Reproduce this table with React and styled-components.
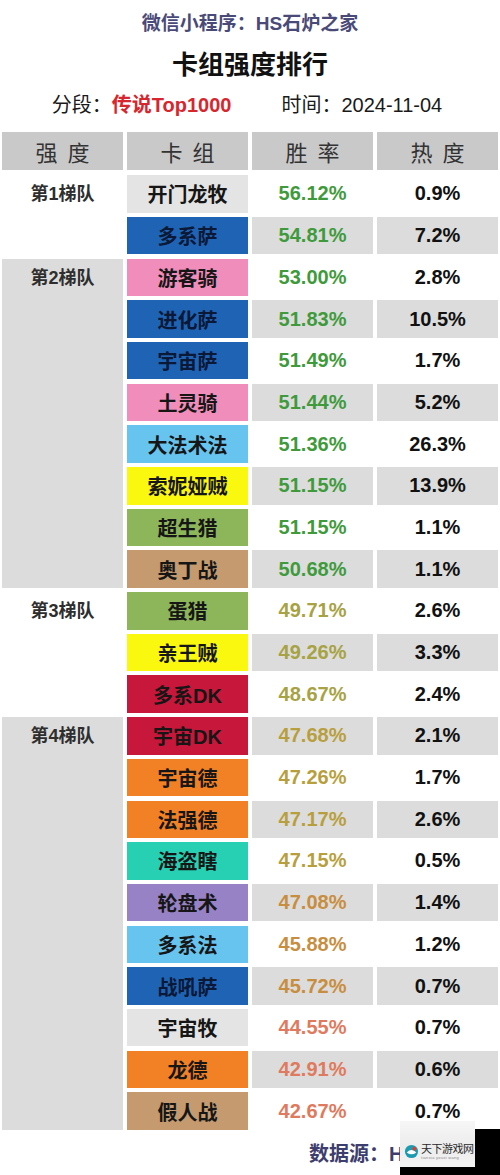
import React from "react";
import styled, { createGlobalStyle } from "styled-components";

const GlobalStyle = createGlobalStyle`
  html, body {
    margin: 0;
    padding: 0;
    background: #ffffff;
  }
  body {
    font-family: "Liberation Sans", "Noto Sans CJK SC", sans-serif;
  }
`;

const DECK_COLORS = {
  priest: "#e4e4e4",
  shaman: "#1f63b4",
  paladin: "#f08dbb",
  mage: "#66c4ee",
  rogue: "#fbf80f",
  hunter: "#8db55a",
  warrior: "#c49a6e",
  dk: "#c7173a",
  druid: "#f28025",
  dh: "#27d0b3",
  warlock: "#9682c4",
};

const RATE_COLORS = {
  high: "#3f9a3c",
  mid: "#a7a243",
  low: "#b89f3e",
  lower: "#c88e3f",
  bottom: "#df7a5e",
};

const tiers = [
  {
    name: "第1梯队",
    decks: [
      ["开门龙牧", "priest", "56.12%", "high", "0.9%"],
      ["多系萨", "shaman", "54.81%", "high", "7.2%"],
    ],
  },
  {
    name: "第2梯队",
    decks: [
      ["游客骑", "paladin", "53.00%", "high", "2.8%"],
      ["进化萨", "shaman", "51.83%", "high", "10.5%"],
      ["宇宙萨", "shaman", "51.49%", "high", "1.7%"],
      ["土灵骑", "paladin", "51.44%", "high", "5.2%"],
      ["大法术法", "mage", "51.36%", "high", "26.3%"],
      ["索妮娅贼", "rogue", "51.15%", "high", "13.9%"],
      ["超生猎", "hunter", "51.15%", "high", "1.1%"],
      ["奥丁战", "warrior", "50.68%", "high", "1.1%"],
    ],
  },
  {
    name: "第3梯队",
    decks: [
      ["蛋猎", "hunter", "49.71%", "mid", "2.6%"],
      ["亲王贼", "rogue", "49.26%", "mid", "3.3%"],
      ["多系DK", "dk", "48.67%", "mid", "2.4%"],
    ],
  },
  {
    name: "第4梯队",
    decks: [
      ["宇宙DK", "dk", "47.68%", "low", "2.1%"],
      ["宇宙德", "druid", "47.26%", "low", "1.7%"],
      ["法强德", "druid", "47.17%", "low", "2.6%"],
      ["海盗瞎", "dh", "47.15%", "low", "0.5%"],
      ["轮盘术", "warlock", "47.08%", "lower", "1.4%"],
      ["多系法", "mage", "45.88%", "lower", "1.2%"],
      ["战吼萨", "shaman", "45.72%", "lower", "0.7%"],
      ["宇宙牧", "priest", "44.55%", "bottom", "0.7%"],
      ["龙德", "druid", "42.91%", "bottom", "0.6%"],
      ["假人战", "warrior", "42.67%", "bottom", "0.7%"],
    ],
  },
];

const Page = styled.div`
  position: relative;
  width: 500px;
  height: 1175px;
  overflow: hidden;
  background: #ffffff;
`;

const Header = styled.header`
  display: flex;
  flex-direction: column;
  align-items: center;
  padding-top: 11px;
`;

const Source = styled.div`
  font-size: 19px;
  line-height: 26px;
  font-weight: 600;
  color: #4a4a78;
`;

const Title = styled.h1`
  margin: 12px 0 0;
  font-size: 26px;
  line-height: 32px;
  font-weight: 700;
  color: #111111;
`;

const Meta = styled.div`
  display: flex;
  gap: 50px;
  margin-top: 11px;
  font-size: 20px;
  line-height: 26px;
  color: #1a1a1a;
  margin-right: 6px;
`;

const Highlight = styled.span`
  color: #d8262e;
  font-weight: 700;
`;

const Table = styled.div`
  display: flex;
  flex-direction: column;
  gap: 4.2px;
  padding: 0 2px;
  margin-top: 14px;
`;

const Tier = styled.div`
  display: grid;
  grid-template-columns: 121px 1fr;
  column-gap: 4px;
`;

const HeadRow = styled.div`
  display: grid;
  grid-template-columns: repeat(4, 1fr);
  column-gap: 4px;
  height: 38px;
  margin-bottom: 1px;
`;

const HeadCell = styled.div`
  display: flex;
  align-items: center;
  justify-content: center;
  background: #c9c9c9;
  color: #333333;
  font-size: 22px;
  letter-spacing: 10px;
  padding-left: 10px;
`;

const TierLabel = styled.div`
  background: ${(p) => (p.$shaded ? "#dcdcdc" : "#ffffff")};
  color: #2e2e2e;
  font-size: 18px;
  font-weight: 600;
  text-align: center;
  padding-top: 7px;
  line-height: 24px;
`;

const Rows = styled.div`
  display: flex;
  flex-direction: column;
  gap: 4.2px;
`;

const DeckRow = styled.div`
  display: grid;
  grid-template-columns: repeat(3, 1fr);
  column-gap: 4px;
  height: 37.5px;
`;

const Cell = styled.div`
  display: flex;
  align-items: center;
  justify-content: center;
  font-size: 20px;
  font-weight: 700;
`;

const DeckCell = styled(Cell)`
  background: ${(p) => DECK_COLORS[p.$cls]};
  color: ${(p) => (p.$cls === "shaman" ? "#0b1836" : "#161616")};
`;

const RateCell = styled(Cell)`
  background: ${(p) => (p.$shaded ? "#dcdcdc" : "#ffffff")};
  color: ${(p) => RATE_COLORS[p.$level]};
  font-weight: 600;
`;

const HeatCell = styled(Cell)`
  background: ${(p) => (p.$shaded ? "#dcdcdc" : "#ffffff")};
  color: #111111;
`;

const Footer = styled.div`
  display: flex;
  justify-content: flex-start;
  padding-left: 309px;
  margin-top: 8px;
  font-size: 20px;
  font-weight: 700;
  color: #3e3e6e;
  white-space: nowrap;
`;

const Watermark = styled.div`
  position: absolute;
  right: 0;
  bottom: 0;
  width: 100px;
  height: 46px;
  background: #000000;
`;

const WatermarkCard = styled.div`
  position: absolute;
  left: 0;
  top: -8px;
  width: 75px;
  height: 46px;
  background: linear-gradient(180deg, #f6f6f6 0%, #ececec 55%, #f3f3f3 100%);
  display: flex;
  align-items: center;
  padding-left: 4px;
  gap: 2px;
  box-sizing: border-box;
  padding-top: 14px;
`;

const WatermarkText = styled.div`
  display: flex;
  flex-direction: column;
  line-height: 1;
`;

const WatermarkName = styled.span`
  font-family: "Noto Sans CJK SC", sans-serif;
  font-size: 11px;
  color: #2a2a2a;
  letter-spacing: -0.5px;
`;

const WatermarkSub = styled.span`
  font-size: 4px;
  color: #888888;
  margin-top: 2px;
  letter-spacing: 0.3px;
`;

const Logo = () => (
  <svg width="15" height="15" viewBox="0 0 16 16">
    <circle cx="8" cy="8" r="7" fill="#1a9bb0" />
    <path d="M3 9 Q8 4 13 9 Q8 13 3 9Z" fill="#ffffff" />
    <circle cx="11" cy="5" r="2" fill="#e23b2e" />
  </svg>
);

const App = () => {
  let index = 0;
  return (
    <Page>
      <GlobalStyle />
      <Header>
        <Source>微信小程序：HS石炉之家</Source>
        <Title>卡组强度排行</Title>
        <Meta>
          <span>
            分段：<Highlight>传说Top1000</Highlight>
          </span>
          <span>时间：2024-11-04</span>
        </Meta>
      </Header>
      <Table>
        <HeadRow>
          <HeadCell>强度</HeadCell>
          <HeadCell>卡组</HeadCell>
          <HeadCell>胜率</HeadCell>
          <HeadCell>热度</HeadCell>
        </HeadRow>
        {tiers.map((tier, t) => (
          <Tier key={tier.name}>
            <TierLabel $shaded={t % 2 === 1}>{tier.name}</TierLabel>
            <Rows>
              {tier.decks.map(([name, cls, rate, level, heat]) => {
                index += 1;
                const shaded = index % 2 === 0;
                return (
                  <DeckRow key={name}>
                    <DeckCell $cls={cls}>{name}</DeckCell>
                    <RateCell $shaded={shaded} $level={level}>
                      {rate}
                    </RateCell>
                    <HeatCell $shaded={shaded}>{heat}</HeatCell>
                  </DeckRow>
                );
              })}
            </Rows>
          </Tier>
        ))}
      </Table>
      <Footer>数据源：HS石炉之家</Footer>
      <Watermark>
        <WatermarkCard>
          <Logo />
          <WatermarkText>
            <WatermarkName>天下游戏网</WatermarkName>
            <WatermarkSub>tianxia youxi wang</WatermarkSub>
          </WatermarkText>
        </WatermarkCard>
      </Watermark>
    </Page>
  );
};

export default App;
